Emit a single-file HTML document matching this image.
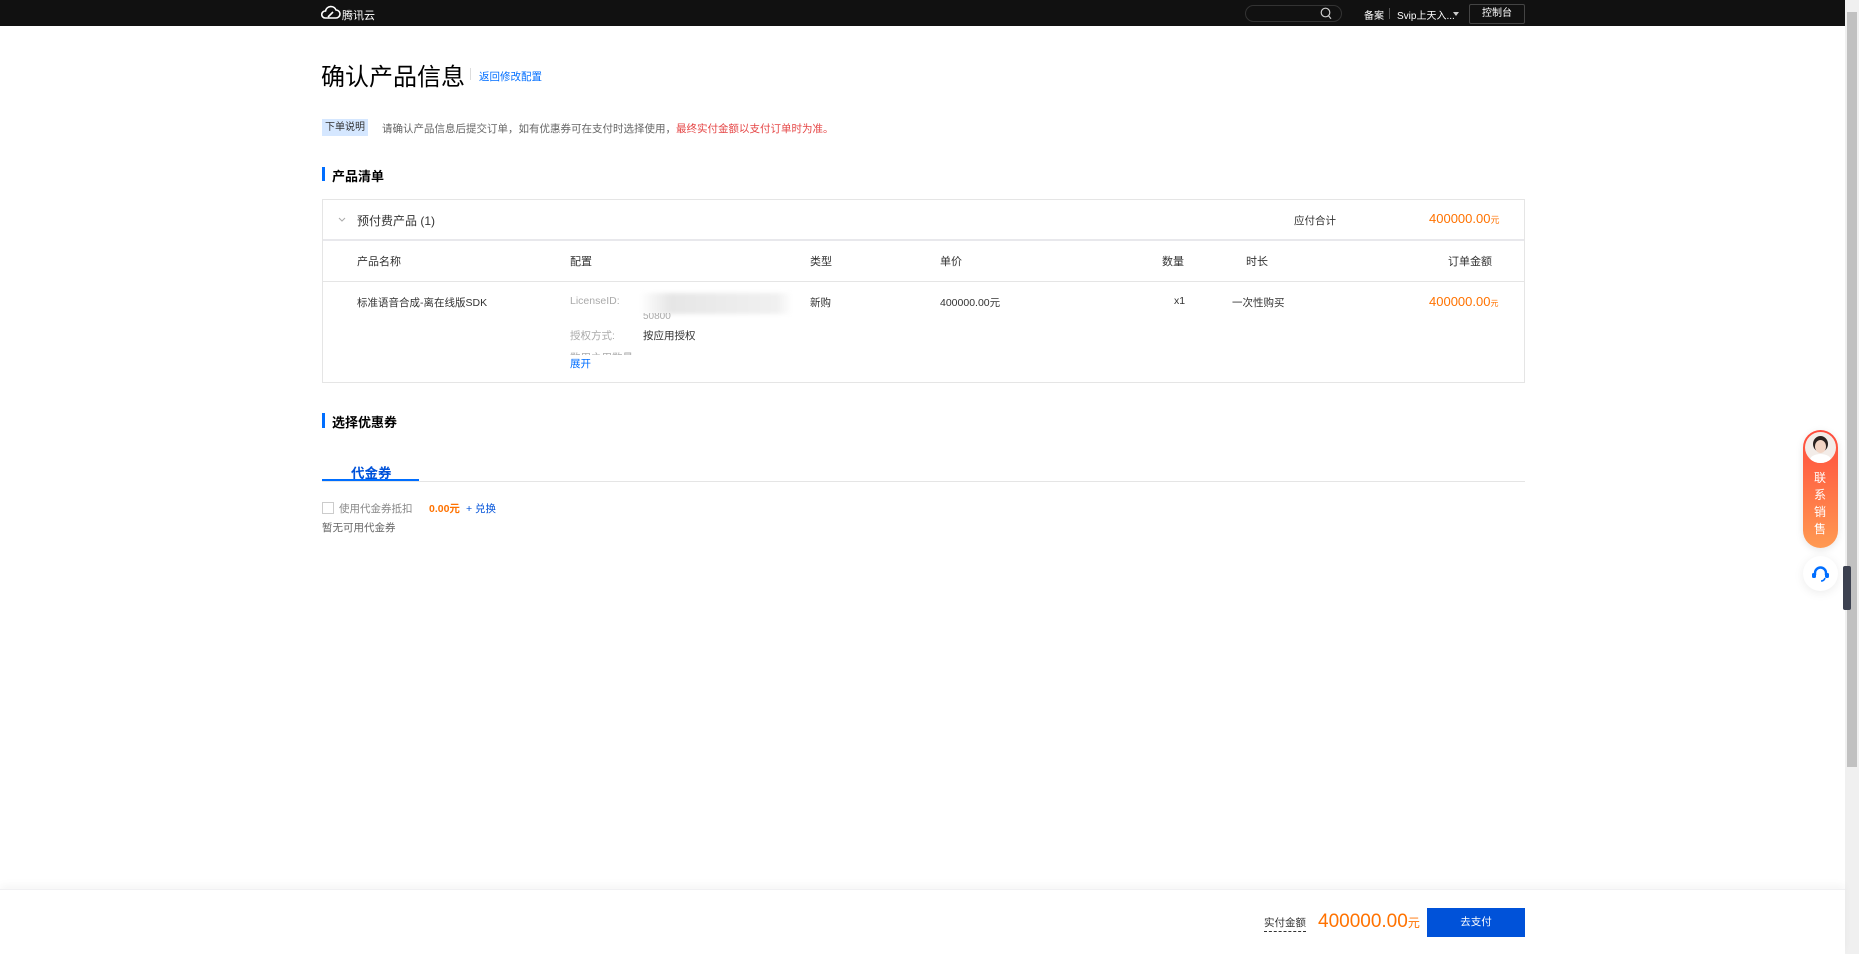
<!DOCTYPE html>
<html><head><meta charset="utf-8"><style>
*{margin:0;padding:0;box-sizing:border-box}
body{width:1859px;height:954px;overflow:hidden;background:#fff;font-family:"Liberation Sans","Noto Sans CJK SC",sans-serif;font-size:12px;color:#333;position:relative}
.abs{position:absolute;white-space:nowrap}
.top{position:absolute;left:0;top:0;width:1845px;height:26px;background:#111}
.or{color:#ff7200}
.blue{color:#006eff}
.th{position:absolute;top:253px;font-size:11px;color:#333}
</style></head><body>
<div class="top">
 <svg class="abs" style="left:321px;top:5px" width="20" height="15" viewBox="0 0 20 15"><path d="M4 13h11a4 4 0 0 0 0-8 5.5 5.5 0 0 0-10.5 1A3.5 3.5 0 0 0 4 13z" fill="none" stroke="#fff" stroke-width="1.6"/><path d="M7 12l5-5" stroke="#fff" stroke-width="1.6"/></svg>
 <div class="abs" style="left:342px;top:7px;color:#fff;font-size:11px">腾讯云</div>
 <div class="abs" style="left:1245px;top:5px;width:97px;height:17px;border:1px solid #333;border-radius:9px"></div>
 <svg class="abs" style="left:1320px;top:7px" width="12" height="13" viewBox="0 0 12 13"><circle cx="5.5" cy="5.5" r="4.3" fill="none" stroke="#ccc" stroke-width="1.2"/><path d="M8.5 8.8l2.5 3" stroke="#ccc" stroke-width="1.2"/></svg>
 <div class="abs" style="left:1364px;top:7px;color:#fff;font-size:10px">备案</div>
 <div class="abs" style="left:1389px;top:8px;width:1px;height:11px;background:#555"></div>
 <div class="abs" style="left:1397px;top:7px;color:#fff;font-size:10px">Svip上天入...</div>
 <div class="abs" style="left:1453px;top:12px;border:3px solid transparent;border-top:4px solid #ccc"></div>
 <div class="abs" style="left:1469px;top:4px;width:56px;height:20px;border:1px solid #444;border-radius:2px;color:#fff;font-size:10px;text-align:center;line-height:18px">控制台</div>
</div>
<div class="abs" style="left:1845px;top:0;width:14px;height:954px;background:#f0f0f0"></div>
<div class="abs" style="left:1847px;top:12px;width:10px;height:755px;background:#c1c1c1"></div>
<div class="abs" style="left:1843px;top:566px;width:8px;height:44px;background:#3c4150;border-radius:2px"></div>

<div class="abs" style="left:321px;top:57px;font-size:24px;color:#000">确认产品信息</div>
<div class="abs" style="left:470px;top:68px;width:1px;height:12px;background:#ddd"></div>
<div class="abs blue" style="left:479px;top:69px;font-size:10.5px">返回修改配置</div>

<div class="abs" style="left:322px;top:119px;width:46px;height:17px;background:#d5e7ff;color:#333;font-size:10px;text-align:center;line-height:17px">下单说明</div>
<div class="abs" style="left:382px;top:121px;font-size:10.5px;color:#666">请确认产品信息后提交订单，如有优惠券可在支付时选择使用，<span style="color:#e54545">最终实付金额以支付订单时为准。</span></div>

<div class="abs" style="left:322px;top:167px;width:3px;height:14px;background:#006eff"></div>
<div class="abs" style="left:332px;top:166px;font-size:13px;font-weight:bold;color:#000">产品清单</div>

<div class="abs" style="left:322px;top:199px;width:1203px;height:184px;border:1px solid #e5e5e5"></div>
<div class="abs" style="left:323px;top:239px;width:1201px;height:2px;background:#e8e8ec"></div>
<div class="abs" style="left:323px;top:281px;width:1201px;height:1px;background:#e5e5e5"></div>
<svg class="abs" style="left:338px;top:217px" width="8" height="6" viewBox="0 0 8 6"><path d="M1 1l3 3 3-3" fill="none" stroke="#aaa"/></svg>
<div class="abs" style="left:357px;top:212px;font-size:12px;color:#333">预付费产品 (1)</div>
<div class="abs" style="left:1294px;top:213px;font-size:10.5px">应付合计</div>
<div class="abs or" style="left:1429px;top:211px;font-size:13px">400000.00<span style="font-size:9px">元</span></div>

<div class="th" style="left:357px">产品名称</div>
<div class="th" style="left:570px">配置</div>
<div class="th" style="left:810px">类型</div>
<div class="th" style="left:940px">单价</div>
<div class="th" style="left:1162px">数量</div>
<div class="th" style="left:1246px">时长</div>
<div class="th" style="left:1448px">订单金额</div>

<div class="abs" style="left:357px;top:295px;font-size:10.5px">标准语音合成-离在线版SDK</div>
<div class="abs" style="left:570px;top:295px;font-size:10.5px;color:#aaa">LicenseID:</div>
<div class="abs" style="left:640px;top:293px;width:152px;height:21px;background:linear-gradient(90deg,#fff,#e6e6e6 20%,#ececec 60%,#f0f0f0 90%,#fff);filter:blur(2px)"></div>
<div class="abs" style="left:643px;top:313px;font-size:10px;color:#aaa;height:7px;overflow:hidden;line-height:7px">50800</div>
<div class="abs" style="left:570px;top:328px;font-size:10.5px;color:#aaa">授权方式:</div>
<div class="abs" style="left:643px;top:328px;font-size:10.5px">按应用授权</div>
<div class="abs" style="left:570px;top:350px;font-size:10.5px;color:#aaa;height:5px;overflow:hidden">数用之用数量</div>
<div class="abs blue" style="left:570px;top:356px;font-size:10.5px">展开</div>
<div class="abs" style="left:810px;top:295px;font-size:10.5px">新购</div>
<div class="abs" style="left:940px;top:295px;font-size:10.5px">400000.00元</div>
<div class="abs" style="left:1174px;top:295px;font-size:10.5px">x1</div>
<div class="abs" style="left:1232px;top:295px;font-size:10.5px">一次性购买</div>
<div class="abs or" style="left:1429px;top:294px;font-size:13px">400000.00<span style="font-size:8px">元</span></div>

<div class="abs" style="left:322px;top:413px;width:3px;height:15px;background:#006eff"></div>
<div class="abs" style="left:332px;top:412px;font-size:13px;font-weight:bold;color:#000">选择优惠券</div>

<div class="abs" style="left:322px;top:481px;width:1203px;height:1px;background:#e5e5e5"></div>
<div class="abs" style="left:322px;top:479px;width:97px;height:2px;background:#006eff"></div>
<div class="abs blue" style="left:351px;top:462px;font-size:13.5px;font-weight:bold;color:#0052d9">代金券</div>

<div class="abs" style="left:322px;top:502px;width:12px;height:12px;border:1px solid #ccc"></div>
<div class="abs" style="left:339px;top:501px;font-size:10.5px;color:#888">使用代金券抵扣</div>
<div class="abs or" style="left:429px;top:501px;font-size:10.5px;font-weight:bold">0.00元</div>
<div class="abs" style="left:466px;top:501px;font-size:10.5px;color:#0052d9">+ 兑换</div>
<div class="abs" style="left:322px;top:520px;font-size:10.5px;color:#666">暂无可用代金券</div>

<div class="abs" style="left:1803px;top:430px;width:35px;height:118px;border-radius:18px;background:linear-gradient(#ff4a3c,#ff9a52);box-shadow:0 2px 8px rgba(0,0,0,.1)"></div>
<div class="abs" style="left:1805px;top:432px;width:31px;height:31px;border-radius:50%;background:#f3ece8;overflow:hidden"><div style="position:absolute;left:8px;top:4px;width:15px;height:16px;border-radius:50%;background:#2a2220"></div><div style="position:absolute;left:10px;top:8px;width:11px;height:13px;border-radius:50%;background:#f2d4c4"></div><div style="position:absolute;left:5px;top:22px;width:21px;height:12px;border-radius:50%;background:#fff"></div></div>
<div class="abs" style="left:1814px;top:470px;color:#fff;font-size:12px;line-height:17px;white-space:normal;width:14px">联系销售</div>
<div class="abs" style="left:1803px;top:556px;width:35px;height:35px;border-radius:50%;background:#fff;box-shadow:0 2px 10px rgba(0,0,0,.08)"></div>
<svg class="abs" style="left:1811px;top:565px" width="19" height="17" viewBox="0 0 19 17"><path d="M4 10V8a5.5 5.5 0 0 1 11 0v2" fill="none" stroke="#006eff" stroke-width="2.4"/><rect x="1" y="8" width="4" height="5" rx="1.5" fill="#006eff"/><rect x="14" y="8" width="4" height="5" rx="1.5" fill="#006eff"/><path d="M14 13q-1 3-4 3" fill="none" stroke="#006eff" stroke-width="1.6"/></svg>

<div class="abs" style="left:0;top:889px;width:1845px;height:65px;background:#fff;box-shadow:0 -4px 8px rgba(0,0,0,.04);border-top:1px solid #f0f0f2"></div>
<div class="abs" style="left:1264px;top:916px;font-size:10.5px;border-bottom:1px dashed #333;line-height:15px">实付金额</div>
<div class="abs or" style="left:1318px;top:911px;font-size:19px">400000.00<span style="font-size:12px">元</span></div>
<div class="abs" style="left:1427px;top:908px;width:98px;height:29px;background:#0052d9;color:#fff;text-align:center;line-height:29px;font-size:10.5px">去支付</div>
</body></html>
